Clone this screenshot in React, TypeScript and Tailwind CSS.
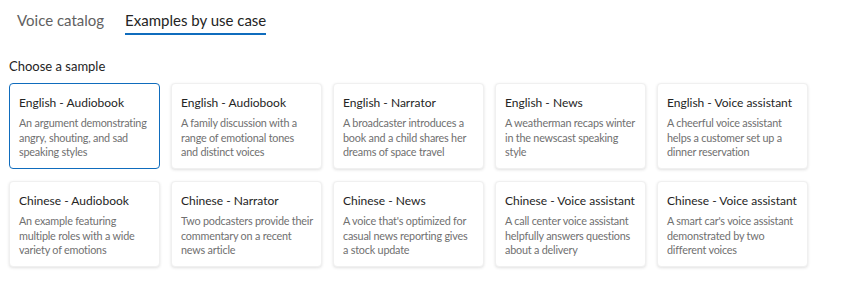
import { useState } from 'react';

interface Sample {
  title: string;
  lines: string[];
}

// line breaks kept as they show in the catalog
const samples: Sample[] = [
  { title: 'English - Audiobook', lines: ['An argument demonstrating', 'angry, shouting, and sad', 'speaking styles'] },
  { title: 'English - Audiobook', lines: ['A family discussion with a', 'range of emotional tones', 'and distinct voices'] },
  { title: 'English - Narrator', lines: ['A broadcaster introduces a', 'book and a child shares her', 'dreams of space travel'] },
  { title: 'English - News', lines: ['A weatherman recaps winter', 'in the newscast speaking', 'style'] },
  { title: 'English - Voice assistant', lines: ['A cheerful voice assistant', 'helps a customer set up a', 'dinner reservation'] },
  { title: 'Chinese - Audiobook', lines: ['An example featuring', 'multiple roles with a wide', 'variety of emotions'] },
  { title: 'Chinese - Narrator', lines: ['Two podcasters provide their', 'commentary on a recent', 'news article'] },
  { title: 'Chinese - News', lines: ["A voice that's optimized for", 'casual news reporting gives', 'a stock update'] },
  { title: 'Chinese - Voice assistant', lines: ['A call center voice assistant', 'helpfully answers questions', 'about a delivery'] },
  { title: 'Chinese - Voice assistant', lines: ["A smart car's voice assistant", 'demonstrated by two', 'different voices'] },
];

export default function App() {
  const [tab, setTab] = useState(1);
  const [selected, setSelected] = useState(0);

  return (
    <div className="min-h-screen bg-white font-['Lato','Open_Sans',sans-serif] text-[#242424]">
      {/* tabs */}
      <div className="flex gap-[21px] px-[17px] pt-[10px]">
        {['Voice catalog', 'Examples by use case'].map((t, i) => (
          <button
            key={t}
            onClick={() => setTab(i)}
            className={`pb-[3px] text-[15px] leading-[20px] border-b-2 ${
              tab === i ? 'border-[#0f6cbd] text-[#242424]' : 'border-transparent text-[#616161]'
            }`}
          >
            {t}
          </button>
        ))}
      </div>

      <div className="px-[9px] pt-[22px]">
        <h2 className="text-[13px] leading-[18px] mb-[8px]">Choose a sample</h2>
        <div className="grid grid-cols-[repeat(5,151px)] gap-x-[11px] gap-y-[12px]">
          {samples.map((s, i) => (
            <button
              key={i}
              onClick={() => setSelected(i)}
              className={`h-[86px] flex flex-col justify-start text-left rounded-[4px] pl-[9px] pr-[4px] pt-[10px] bg-white border ${
                selected === i
                  ? 'border-[#0f6cbd] shadow-none'
                  : 'border-[#f0f0f0] shadow-[0_1px_3px_rgba(0,0,0,0.12)]'
              }`}
            >
              <div className="text-[12px] leading-[17px] text-[#242424] whitespace-nowrap">{s.title}</div>
              <div className="mt-[5px] text-[10.8px] tracking-[-0.2px] leading-[14.5px] text-[#707070] whitespace-nowrap">
                {s.lines.map((l) => (
                  <div key={l}>{l}</div>
                ))}
              </div>
            </button>
          ))}
        </div>
      </div>
    </div>
  );
}
